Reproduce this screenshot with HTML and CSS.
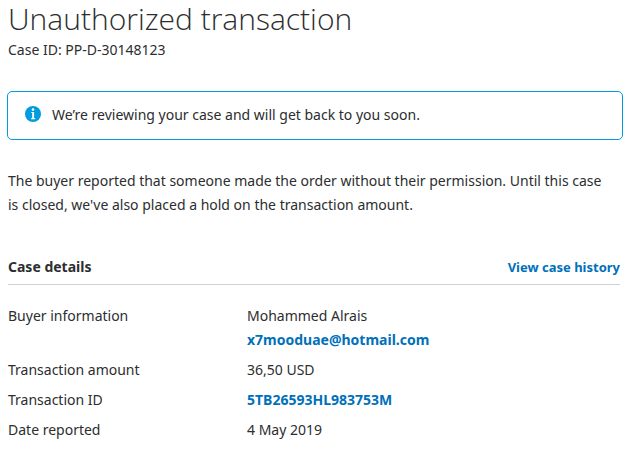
FILE: index.html
```html
<!DOCTYPE html>
<html lang="en">
<head>
<meta charset="utf-8">
<meta name="viewport" content="width=device-width, initial-scale=1">
<title>Unauthorized transaction</title>
<link rel="stylesheet" href="styles.css">
</head>
<body>
<main class="case">
  <header class="case-header">
    <h1 class="title">Unauthorized transaction</h1>
    <p class="case-id">Case ID: PP-D-30148123</p>
  </header>
  <div class="notice" role="status">
    <svg class="notice-icon" viewBox="0 0 16 16" aria-hidden="true">
      <circle cx="8" cy="8" r="8" fill="#009cde"/>
      <circle cx="8" cy="3.6" r="1.3" fill="#fff"/>
      <path d="M6.3 5.9H9.1v6.2h1v1.1H6.2v-1.1h1V7h-.9z" fill="#fff"/>
    </svg>
    <p class="notice-text">We’re reviewing your case and will get back to you soon.</p>
  </div>
  <p class="summary">The buyer reported that someone made the order without their permission. Until this case is closed, we've also placed a hold on the transaction amount.</p>
  <section class="details">
    <div class="details-header">
      <h2 class="details-title">Case details</h2>
      <a class="link history" href="#">View case history</a>
    </div>
    <dl class="rows">
      <dt>Buyer information</dt>
      <dd>Mohammed Alrais<br><a class="link" href="#">x7mooduae@hotmail.com</a></dd>
      <dt>Transaction amount</dt>
      <dd>36,50 USD</dd>
      <dt>Transaction ID</dt>
      <dd><a class="link" href="#">5TB26593HL983753M</a></dd>
      <dt>Date reported</dt>
      <dd>4 May 2019</dd>
    </dl>
  </section>
</main>
</body>
</html>
```
FILE: styles.css
```css
* { box-sizing: border-box; }
body {
  margin: 0;
  background: #fff;
  color: #2c2e2f;
  font: 14px/24px "Noto Sans", "Open Sans", sans-serif;
}
h1, h2, p, dl, dd { margin: 0; }
.case { padding: 0 19px 0 8px; }
.title {
  font-family: "Open Sans", "Noto Sans", sans-serif;
  font-size: 30px;
  line-height: 38px;
  font-weight: 300;
}
.notice {
  display: flex;
  align-items: center;
  gap: 11px;
  margin: 29px -3px 0 -1px;
  padding: 11px 17px 12px;
  border: 1px solid #009cde;
  border-radius: 5px;
}
.notice-icon { width: 16px; height: 16px; flex: none; margin-top: -3px; }
.summary { margin-top: 29px; padding-right: 8px; }
.details { margin-top: 38px; }
.details-header {
  display: flex;
  justify-content: space-between;
  padding-bottom: 5px;
  border-bottom: 1px solid #cbd2d6;
}
.details-title { font-size: 14px; line-height: 24px; font-weight: 700; }
.link { color: #0070ba; font-weight: 700; text-decoration: none; }
.history { font-size: 13px; }
.rows {
  display: grid;
  grid-template-columns: 239px 1fr;
  row-gap: 6px;
  padding-top: 19px;
}
```
